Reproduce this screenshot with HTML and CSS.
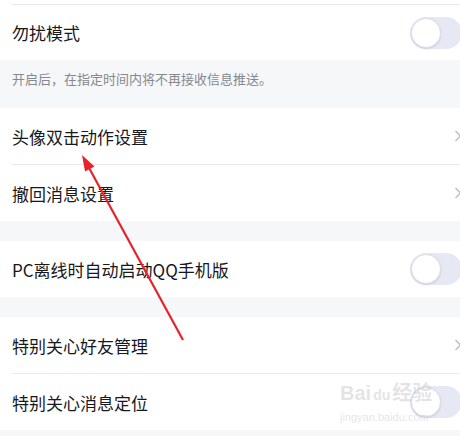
FILE: index.html
```html
<!DOCTYPE html>
<html lang="zh-CN">
<head>
    <meta charset="UTF-8">
    <meta name="viewport" content="width=device-width, initial-scale=1.0">
    <title>辅助功能设置</title>
    <link rel="stylesheet" href="styles.css">
</head>
<body>
    <div class="page">
        <div class="group">
            <div class="stub"></div>
            <div class="row row-first">
                <span class="label">勿扰模式</span>
                <span class="switch"><span class="knob"></span></span>
            </div>
        </div>
        <div class="note">开启后，在指定时间内将不再接收信息推送。</div>

        <div class="group">
            <div class="row">
                <span class="label">头像双击动作设置</span>
                <svg class="chevron" width="8" height="12" viewBox="0 0 8 12"><path d="M1.5 1 L6.5 6 L1.5 11" fill="none" stroke="#b9bccb" stroke-width="1.4"/></svg>
            </div>
            <div class="row">
                <span class="label">撤回消息设置</span>
                <svg class="chevron" width="8" height="12" viewBox="0 0 8 12"><path d="M1.5 1 L6.5 6 L1.5 11" fill="none" stroke="#b9bccb" stroke-width="1.4"/></svg>
            </div>
        </div>
        <div class="gap"></div>

        <div class="group">
            <div class="row">
                <span class="label">PC离线时自动启动QQ手机版</span>
                <span class="switch"><span class="knob"></span></span>
            </div>
        </div>
        <div class="gap"></div>

        <div class="group">
            <div class="row">
                <span class="label">特别关心好友管理</span>
                <svg class="chevron" width="8" height="12" viewBox="0 0 8 12"><path d="M1.5 1 L6.5 6 L1.5 11" fill="none" stroke="#b9bccb" stroke-width="1.4"/></svg>
            </div>
            <div class="row">
                <span class="label">特别关心消息定位</span>
                <span class="switch"><span class="knob"></span></span>
            </div>
        </div>
    </div>

    <!-- 标注箭头 -->
    <svg class="arrow" width="460" height="436" viewBox="0 0 460 436">
        <line x1="183" y1="340" x2="88" y2="166" stroke="#e5232b" stroke-width="2.2"/>
        <polygon points="82,155 94.5,166.5 85,171.5" fill="#e5232b"/>
    </svg>

    <div class="watermark">
        <div class="wm-logo">Bai<span class="wm-du">du</span>经验</div>
        <div class="wm-url">jingyan.baidu.com</div>
    </div>
</body>
</html>
```

FILE: styles.css
```css
body {
    margin: 0;
    width: 460px;
    height: 436px;
    overflow: hidden;
    background-color: #f6f7f9;
    font-family: "Noto Sans CJK SC", "Noto Sans", sans-serif;
    color: #17181c;
    position: relative;
}
.group {
    background-color: #fff;
}
.stub {
    height: 4px;
}
.row {
    height: 56px;
    margin-left: 11px;
    padding-left: 1px;
    display: flex;
    align-items: center;
    justify-content: space-between;
    box-sizing: border-box;
}
.row + .row,
.row-first {
    border-top: 1px solid #e9eaf0;
    height: 57px;
}
.row-first {
    height: 56px;
}
.label {
    font-size: 17px;
}
.note {
    height: 48px;
    box-sizing: border-box;
    padding: 9px 0 0 12px;
    font-size: 13px;
    line-height: 20px;
    color: #86888f;
}
.gap {
    height: 20px;
}
.chevron {
    margin-right: -2px;
    flex-shrink: 0;
}
.switch {
    position: relative;
    width: 52px;
    height: 32px;
    border-radius: 16px;
    background-color: #e6e8f4;
    margin-right: -2px;
    flex-shrink: 0;
}
.knob {
    position: absolute;
    left: 1px;
    top: 1px;
    width: 28px;
    height: 28px;
    border-radius: 50%;
    background-color: #fff;
    border: 1px solid #dcdfec;
    box-shadow: 0 1px 2px rgba(120, 125, 160, 0.25);
}
.arrow {
    position: absolute;
    left: 0;
    top: 0;
    pointer-events: none;
}
.watermark {
    position: absolute;
    left: 340px;
    top: 380px;
    color: rgba(195, 195, 200, 0.45);
    font-family: "Liberation Sans", "Noto Sans CJK SC", sans-serif;
    pointer-events: none;
}
.wm-logo {
    font-size: 20px;
    font-weight: bold;
    line-height: 26px;
}
.wm-du {
    font-size: 14px;
    margin: 0 2px;
}
.wm-url {
    font-size: 11px;
    line-height: 14px;
    margin-top: 2px;
}
```
